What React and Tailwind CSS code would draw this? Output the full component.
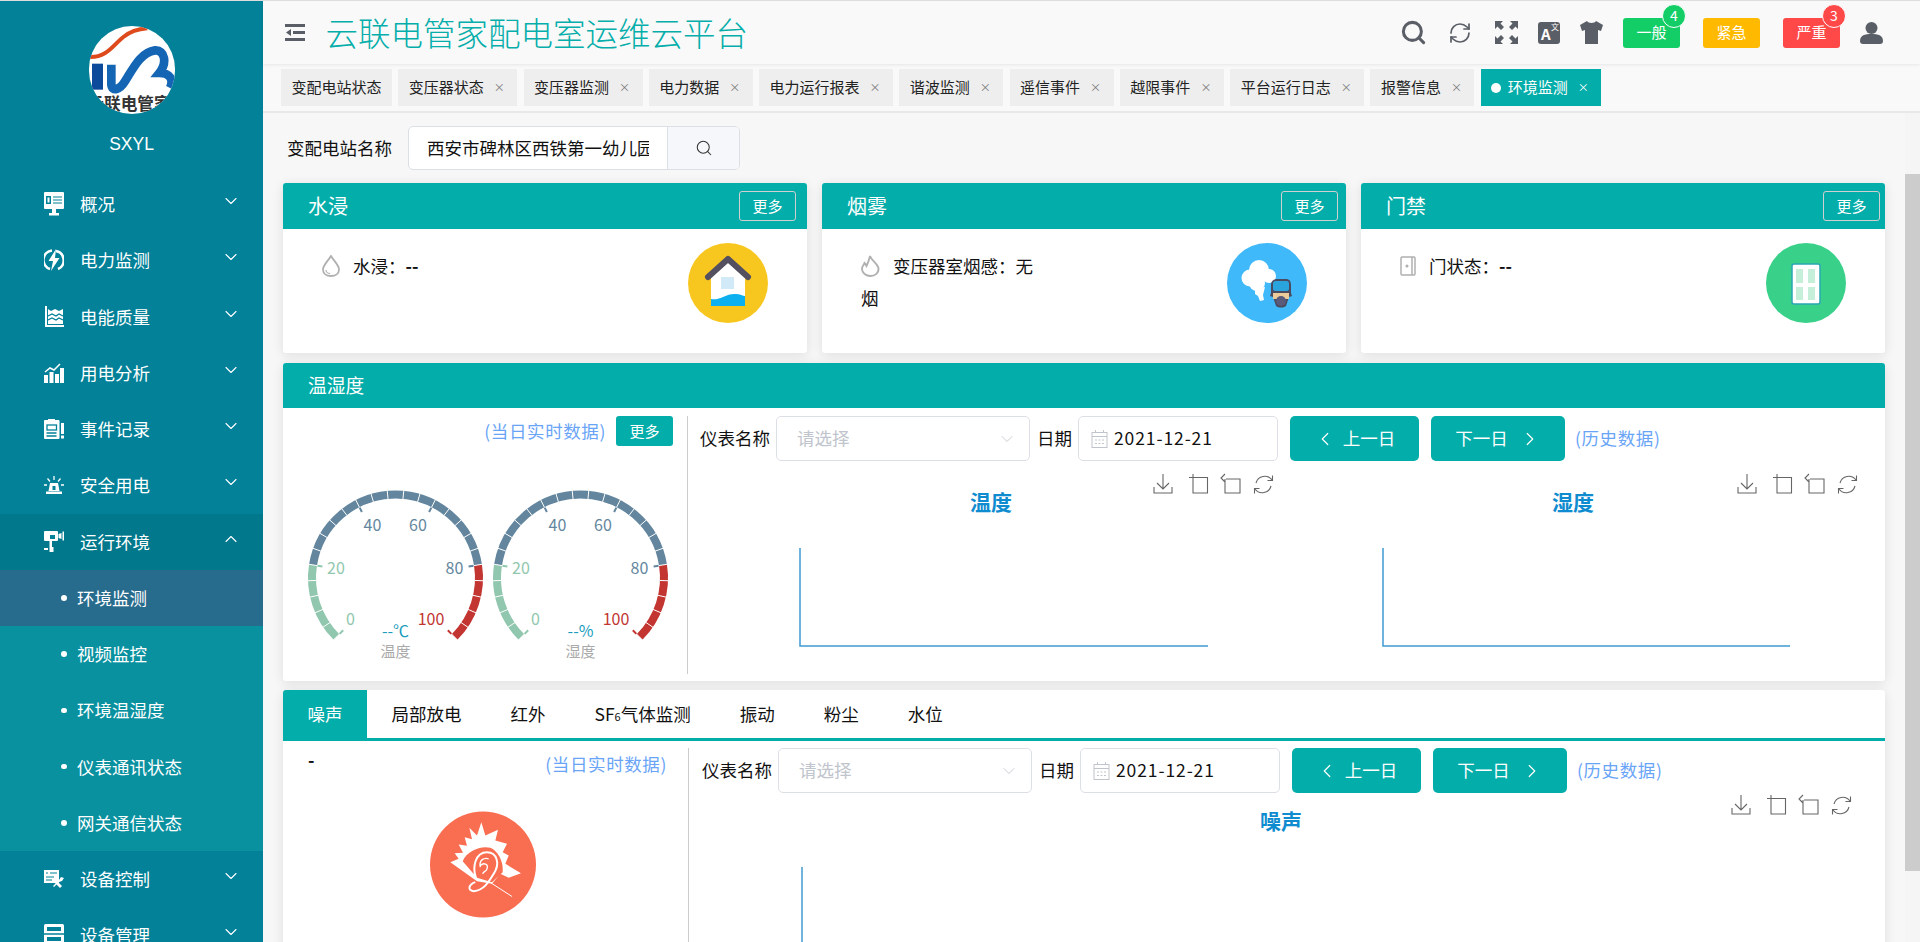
import React from "react";
import { ChevronDown, ChevronUp, ChevronLeft, ChevronRight, Search, RefreshCw } from "lucide-react";

const W = "#ffffff";

function IconMonitor() {
  return (
    <svg width="20" height="24" viewBox="0 0 20 24">
      <rect x="0" y="0" width="20" height="17" rx="1" fill={W} />
      <rect x="2" y="4" width="5" height="8" fill="#028198" />
      <rect x="3.5" y="5.5" width="2" height="5" fill={W} />
      <path d="M9 5h9M9 8h9M9 11h9" stroke="#028198" strokeWidth="1.2" />
      <rect x="8" y="17" width="4" height="4" fill={W} />
      <rect x="5" y="21" width="10" height="2.5" fill={W} />
    </svg>
  );
}
function IconPower() {
  return (
    <svg width="20" height="24" viewBox="0 0 20 24">
      <path d="M8 2.5A9.5 9.5 0 0 0 6 21M12 3a9.5 9.5 0 0 1 2 18" stroke={W} strokeWidth="2.5" fill="none" />
      <path d="M12 1L4.5 13H9L7 23l8.5-13H11z" fill={W} />
    </svg>
  );
}
function IconQuality() {
  return (
    <svg width="20" height="22" viewBox="0 0 20 22">
      <path d="M1 0v21h19v-2H3V0z" fill={W} />
      <path d="M4 3l3 2 4-2 4 2 4-2v15H4z" fill={W} />
      <path d="M4 10l4-2 4 2 3-2 4 2M4 14l4-2 4 2 3-2 4 2" stroke="#028198" strokeWidth="1.3" fill="none" />
    </svg>
  );
}
function IconBars() {
  return (
    <svg width="20" height="20" viewBox="0 0 20 20">
      <rect x="0" y="12" width="4" height="8" fill={W} />
      <rect x="5.5" y="9" width="4" height="11" fill={W} />
      <rect x="11" y="11" width="4" height="9" fill={W} />
      <rect x="16" y="5" width="4" height="15" fill={W} />
      <path d="M1 9l5-4 4 2 6-6" stroke={W} strokeWidth="1.5" fill="none" />
    </svg>
  );
}
function IconEvent() {
  return (
    <svg width="20" height="20" viewBox="0 0 20 20">
      <rect x="0" y="1" width="15.5" height="19" rx="1" fill={W} />
      <rect x="17" y="4" width="3" height="11" fill={W} />
      <rect x="17" y="16.5" width="3" height="3" fill={W} />
      <rect x="4" y="0" width="7" height="4" fill={W} />
      <rect x="3" y="6" width="9.5" height="5" fill="none" stroke="#028198" strokeWidth="1.3" />
      <path d="M2.5 14h10M2.5 17h10" stroke="#028198" strokeWidth="1.3" />
    </svg>
  );
}
function IconSiren() {
  return (
    <svg width="20" height="18" viewBox="0 0 20 18">
      <path d="M6 7h8l1.5 8h-11z" fill={W} />
      <rect x="8.5" y="10" width="3" height="4" fill="#028198" />
      <rect x="2" y="15.5" width="16" height="2.5" fill={W} />
      <path d="M10 0v4M3.5 2.5l2.5 3M16.5 2.5l-2.5 3M0 9h3M17 9h3" stroke={W} strokeWidth="1.3" />
    </svg>
  );
}
function IconCamera() {
  return (
    <svg width="20" height="22" viewBox="0 0 20 22">
      <rect x="0" y="0" width="14" height="10" rx="1" fill={W} />
      <rect x="6" y="4" width="5" height="4" fill="#028198" />
      <path d="M14.5 3l3-1v6l-3-1zM18.500 0.500h1.500v9h-1.500z" fill={W} />
      <rect x="5.5" y="10" width="2.5" height="6" fill={W} />
      <rect x="0" y="17" width="4" height="2" fill={W} />
      <rect x="5.5" y="16" width="4" height="5" fill={W} />
    </svg>
  );
}
function IconControl() {
  return (
    <svg width="20" height="18" viewBox="0 0 20 18">
      <rect x="0" y="0" width="15" height="13" fill={W} />
      <path d="M2 3h2M6 3h7M2 7h8M2 10h6" stroke="#028198" strokeWidth="1.2" />
      <path d="M9 16l6-6 2-3 3 1-2 3-3 1-5 5z" fill={W} />
      <path d="M12 10l6 6-2 2-6-6z" fill={W} />
    </svg>
  );
}
function IconDevice() {
  return (
    <svg width="20" height="22" viewBox="0 0 20 22">
      <rect x="0" y="0" width="20" height="22" rx="1.5" fill={W} />
      <rect x="3" y="3" width="14" height="4" fill="#028198" />
      <path d="M0 10h20" stroke="#028198" strokeWidth="1.5" />
      <rect x="3" y="13" width="14" height="4" fill="#028198" />
    </svg>
  );
}

function Logo() {
  return (
    <svg viewBox="57 50 258 262" className="w-[86px] h-[88px] rounded-full bg-white">
      <path d="M57 142C110 145 130 105 160 82C180 66 205 58 232 56" stroke="#df4a1c" strokeWidth="12" fill="none" />
      <rect x="66" y="162" width="33" height="78" fill="#0d4a9c" />
      <path d="M124 165V225C126 248 150 240 165 215C190 175 212 128 255 122C285 120 292 160 268 190C300 190 312 210 300 235" stroke="#1565b5" strokeWidth="26" fill="none" />
      <text x="52" y="300" fontSize="50" fontWeight="700" fill="#333333">云联电管家</text>
    </svg>
  );
}

function House() {
  return (
    <svg width="80" height="80" viewBox="0 0 80 80">
      <circle cx="40" cy="40" r="40" fill="#f8c71f" />
      <path d="M23 32L40 17 57 32V62H23z" fill="#ffffff" />
      <path d="M20 34L40 16 60 34" stroke="#54505f" strokeWidth="6" strokeLinecap="round" strokeLinejoin="round" fill="none" />
      <rect x="33" y="34" width="13" height="12" fill="#d2eaf8" />
      <path d="M23 56C32 58 38 50 48 51C52 51 55 53 57 53V63H23z" fill="#0cb0ef" />
    </svg>
  );
}
function Smoke() {
  return (
    <svg width="80" height="80" viewBox="0 0 80 80">
      <circle cx="40" cy="40" r="40" fill="#40b9fb" />
      <circle cx="23" cy="35" r="8.5" fill="#fff" />
      <circle cx="32" cy="27" r="10" fill="#fff" />
      <circle cx="42" cy="33" r="7" fill="#fff" />
      <circle cx="30" cy="40" r="8" fill="#fff" />
      <path d="M28 46l10-2-2 8 1 5-4 1-2-5-3-2z" fill="#fff" />
      <path d="M44 50V42c0-4 3-6 6-6h9c3 0 5 2 5 6v8l1 3-3 1-3 9c-3 2-7 2-10 0l-3-9-3-1z" fill="#4a4a60" />
      <rect x="46" y="38" width="16" height="10" rx="2.500" fill="#2aa4dc" />
      <rect x="46" y="50" width="16" height="6" fill="#eccb9a" />
      <ellipse cx="54" cy="58" rx="5" ry="5" fill="#5a5a7a" />
    </svg>
  );
}
function Door() {
  return (
    <svg width="80" height="80" viewBox="0 0 80 80">
      <circle cx="40" cy="40" r="40" fill="#39d08a" />
      <rect x="26" y="21" width="28" height="40" rx="2" fill="#fff" stroke="#2aa6b4" strokeWidth="1.5" />
      <rect x="30" y="26" width="7" height="14" fill="#c5efd9" />
      <rect x="42" y="26" width="7" height="14" fill="#c5efd9" />
      <rect x="30" y="44" width="7" height="13" fill="#c5efd9" />
      <rect x="42" y="44" width="7" height="13" fill="#c5efd9" />
    </svg>
  );
}
function Noise() {
  return (
    <svg width="106" height="107" viewBox="14 12 318 320">
      <circle cx="173" cy="172" r="159" fill="#f96d51" />
      <path d="M75 165L100 155 88 138 113 137 100 112 125 116 118 90 140 96 132 62 155 85 168 45 180 85 218 68 210 100 245 110 232 135 250 145 240 170 287 198 250 212 225 200 200 230 155 222z" fill="#ffffff" />
      <path d="M112 162C125 132 165 115 195 122C215 130 235 160 232 195L200 225 155 212z" fill="#f96d51" />
      <path d="M152 213C140 180 150 135 185 135C215 135 225 170 205 200C190 225 175 250 145 252C125 250 130 232 150 225" stroke="#ffffff" strokeWidth="6" fill="none" />
      <path d="M165 180C160 160 175 150 190 155M165 175C175 165 190 170 185 185C182 195 175 190 172 200" stroke="#ffffff" strokeWidth="4" fill="none" />
      <path d="M195 226L260 268" stroke="#ffffff" strokeWidth="3" />
    </svg>
  );
}

function Gauge({ value, label }) {
  const cx = 92.5;
  const cy = 95;
  const pt = (v, r) => {
    const a = ((225 - 2.7 * v) * Math.PI) / 180;
    return [cx + r * Math.cos(a), cy - r * Math.sin(a)];
  };
  const arc = (from, to, r) => {
    const [x1, y1] = pt(from, r);
    const [x2, y2] = pt(to, r);
    const large = (to - from) * 2.7 > 180 ? 1 : 0;
    return `M${x1} ${y1}A${r} ${r} 0 ${large} 1 ${x2} ${y2}`;
  };
  const colorOf = (v) => (v <= 20 ? "#91c7ae" : v <= 80 ? "#63869e" : "#c23531");
  const ticks = [];
  for (let v = 0; v <= 100; v += 4) {
    const [x1, y1] = pt(v, 79);
    const [x2, y2] = pt(v, 88);
    ticks.push(<line key={v} x1={x1} y1={y1} x2={x2} y2={y2} stroke="#ffffff" strokeWidth="1" />);
  }
  const splits = [0, 20, 40, 60, 80, 100].map((v) => {
    const [x1, y1] = pt(v, 74);
    const [x2, y2] = pt(v, 79);
    return <line key={v} x1={x1} y1={y1} x2={x2} y2={y2} stroke={colorOf(v)} strokeWidth="2" />;
  });
  return (
    <svg width="185" height="190" viewBox="0 0 185 190">
      <path d={arc(0, 20, 83.5)} stroke="#91c7ae" strokeWidth="8" fill="none" />
      <path d={arc(20, 80, 83.5)} stroke="#63869e" strokeWidth="8" fill="none" />
      <path d={arc(80, 100, 83.5)} stroke="#c23531" strokeWidth="8" fill="none" />
      {ticks}
      {splits}
      <g fontSize="16" textAnchor="middle" dominantBaseline="central">
        <text x="47.5" y="135" fill="#91c7ae">0</text>
        <text x="33" y="84" fill="#91c7ae">20</text>
        <text x="69.5" y="41" fill="#63869e">40</text>
        <text x="115" y="41" fill="#63869e">60</text>
        <text x="151.5" y="84" fill="#63869e">80</text>
        <text x="128" y="135" fill="#c23531">100</text>
        <text x="92.5" y="146.5" fill="#1a9dbd">{value}</text>
        <text x="92.5" y="167" fontSize="15" fill="#aaaaaa">{label}</text>
      </g>
    </svg>
  );
}

function Toolbox({ x, y }) {
  return (
    <g stroke="#666666" strokeWidth="1.1" fill="none" transform={`translate(${x} ${y})`}>
      <path d="M10 0v15M4 9l6 6 6-6M1 13v6h18v-6" />
      <path d="M36 3.500H54.500V19H40V0" />
      <path d="M73 5H87V19H72V5M72 0l-4 4 4 4" />
      <path d="M103 9a9 9 0 0 1 16-3M119.500 1.500v5h-5M118 12a9 9 0 0 1-16 3M101.500 19.500v-5h5" />
    </g>
  );
}

function Chart({ title, h, titleX, titleY, iconX, iconY, axisTop, axisBottom, axisRight, width }) {
  return (
    <svg width={width} height={h} viewBox={`0 0 ${width} ${h}`} className="block">
      <text x={titleX} y={titleY} fontSize="21" fontWeight="700" fill="#0f8ccf" textAnchor="middle" dominantBaseline="central">{title}</text>
      <Toolbox x={iconX} y={iconY} />
      <path d={`M100 ${axisTop}V${axisBottom}${axisRight ? `H${axisRight}` : ""}`} stroke="#3f9bd2" strokeWidth="1.5" fill="none" />
    </svg>
  );
}

function Filters() {
  return (
    <div className="flex items-center text-[17.5px] text-[#111]">
      <span className="w-[70px] whitespace-nowrap">仪表名称</span>
      <div className="ml-[6px] w-[254px] h-[45px] border border-[#dcdfe6] rounded-[5px] flex items-center justify-between pl-[20px] pr-[12px] text-[#c0c4cc]">
        <span>请选择</span>
        <ChevronDown size={20} strokeWidth={1} />
      </div>
      <span className="ml-[7px] w-[35px] whitespace-nowrap">日期</span>
      <div className="ml-[6px] w-[200px] h-[45px] border border-[#dcdfe6] rounded-[5px] flex items-center pl-[12px]">
        <svg width="17" height="18" viewBox="0 0 17 18" fill="none" stroke="#c0c4cc">
          <rect x="1" y="2.500" width="15" height="15" />
          <path d="M1 6.500h15M4.500 0v3M12.500 0v3" />
          <path d="M4 10h9M4 13.500h9" strokeDasharray="2 1.500" />
        </svg>
        <span className="ml-[6px] tracking-[0.9px]">2021-12-21</span>
      </div>
      <button className="ml-[12px] w-[129px] h-[45px] rounded-[5px] bg-[#03ada9] text-white flex items-center justify-center gap-[7px]">
        <ChevronLeft size={22} strokeWidth={1.3} />
        <span>上一日</span>
      </button>
      <button className="ml-[12px] w-[134px] h-[45px] rounded-[5px] bg-[#03ada9] text-white flex items-center justify-center gap-[11px]">
        <span>下一日</span>
        <ChevronRight size={22} strokeWidth={1.3} />
      </button>
      <span className="ml-[10px] tracking-[0.6px] text-[#69a4f7]">(历史数据)</span>
    </div>
  );
}

const menu = [
  { name: "概况", icon: IconMonitor },
  { name: "电力监测", icon: IconPower },
  { name: "电能质量", icon: IconQuality },
  { name: "用电分析", icon: IconBars },
  { name: "事件记录", icon: IconEvent },
  { name: "安全用电", icon: IconSiren },
  { name: "运行环境", icon: IconCamera, open: true },
];
const subMenu = ["环境监测", "视频监控", "环境温湿度", "仪表通讯状态", "网关通信状态"];
const menu2 = [
  { name: "设备控制", icon: IconControl },
  { name: "设备管理", icon: IconDevice },
];

function MenuRow({ item }) {
  const Icon = item.icon;
  return (
    <div className={`h-[56.25px] flex items-center text-[17.5px] text-white ${item.open ? "bg-[#01788c]" : ""}`}>
      <div className="w-[20px] ml-[44px] flex justify-center">
        <Icon />
      </div>
      <span className="ml-[16px]">{item.name}</span>
      <span className="ml-auto mr-[22px] -mt-[6px]">
        {item.open ? <ChevronUp size={20} strokeWidth={1.3} /> : <ChevronDown size={20} strokeWidth={1.3} />}
      </span>
    </div>
  );
}

const tabs = ["变压器状态", "变压器监测", "电力数据", "电力运行报表", "谐波监测", "遥信事件", "越限事件", "平台运行日志", "报警信息"];

function Card({ title, moreClass, children, art }) {
  return (
    <div className="bg-white h-[170px] rounded-[3px] shadow-[0_2px_12px_0_rgba(0,0,0,0.1)] overflow-hidden">
      <div className="h-[46px] bg-[#03ada9] flex items-center justify-between pl-[25px] text-white">
        <span className="text-[20px]">{title}</span>
        <button className={`${moreClass} w-[57px] h-[30px] border border-[#d0d0d0] rounded-[3px] text-[15px]`}>更多</button>
      </div>
      <div className="flex justify-between pl-[39px] pr-[39px]">
        <div className="w-[180px] pt-[21px] text-[17.5px] leading-[32px] text-[#111]">{children}</div>
        <div className="pt-[14px]">{art}</div>
      </div>
    </div>
  );
}

export default function App() {
  return (
    <div className="flex h-screen w-full overflow-hidden border-t border-[#dddddd] bg-[#f7f7f7] font-['Noto_Sans_CJK_SC',sans-serif]">
      <aside className="w-[263px] shrink-0 bg-[#028198] overflow-hidden">
        <div className="h-[175px] flex flex-col items-center pt-[25px]">
          <Logo />
          <div className="mt-[17px] text-[17.5px] text-white font-['Liberation_Sans',sans-serif]">SXYL</div>
        </div>
        {menu.map((m) => (
          <MenuRow key={m.name} item={m} />
        ))}
        <div className="bg-[#0a91a0]">
          {subMenu.map((s, i) => (
            <div key={s} className={`h-[56.25px] flex items-center text-[17.5px] text-white pl-[61px] ${i === 0 ? "bg-[#286c8d]" : ""}`}>
              <span className="w-[5.500px] h-[5.500px] rounded-full bg-white" />
              <span className="ml-[10.500px]">{s}</span>
            </div>
          ))}
        </div>
        {menu2.map((m) => (
          <MenuRow key={m.name} item={m} />
        ))}
      </aside>

      <div className="flex-1 min-w-0 flex flex-col">
        <header className="h-[63px] shrink-0 bg-[#f9f9f9] shadow-[0_1px_3px_rgba(0,0,0,0.08)] flex items-center pl-[21.500px] relative z-10">
          <svg width="20" height="17" viewBox="0 0 20 17">
            <rect x="0" y="0" width="20" height="3" fill="#5a5e66" />
            <rect x="8" y="7" width="12" height="3" fill="#5a5e66" />
            <rect x="0" y="14" width="20" height="3" fill="#5a5e66" />
            <path d="M6 5L1 8.500 6 12z" fill="#5a5e66" />
          </svg>
          <h1 className="ml-[21px] text-[32.500px] leading-none font-light text-[#05aeaa] whitespace-nowrap">云联电管家配电室运维云平台</h1>
          <Search className="ml-auto" size={27} strokeWidth={2.7} color="#5a5e66" />
          <RefreshCw className="ml-[21px]" size={24} strokeWidth={1.7} color="#5a5e66" />
          <svg className="ml-[23px]" width="23" height="23" viewBox="0 0 23 23" fill="#5a5e66">
            <path d="M0 0h8L5.500 2.500 9 6 6 9 2.500 5.500 0 8zM23 0v8L20.500 5.500 17 9 14 6 17.500 2.500 15 0zM0 23v-8L2.500 17.500 6 14 9 17 5.500 20.500 8 23zM23 23h-8L17.500 20.500 14 17 17 14 20.500 17.500 23 15z" />
          </svg>
          <div className="ml-[20px] w-[22px] h-[22px] rounded-[3px] bg-[#5a5e66] text-white relative">
            <span className="absolute left-[3px] top-[4px] text-[15px] leading-none font-bold">A</span>
            <span className="absolute right-[1px] top-[1px] text-[8px] leading-none">文</span>
          </div>
          <svg className="ml-[20px]" width="23" height="23" viewBox="0 0 23 23" fill="#5a5e66">
            <path d="M7 0C8 2.500 15 2.500 16 0L23 4 21 10 18 9V23H5V9L2 10 0 4z" />
          </svg>
          <div className="ml-[20px] w-[57px] h-[30px] rounded-[3px] bg-[#13ce66] text-white text-[15px] flex items-center justify-center relative">
            一般
            <span className="absolute left-[39px] -top-[14px] w-[24px] h-[24px] rounded-full bg-[#13ce66] border border-white flex items-center justify-center text-[14px]">4</span>
          </div>
          <div className="ml-[23px] w-[57px] h-[30px] rounded-[3px] bg-[#ffba00] text-white text-[15px] flex items-center justify-center">紧急</div>
          <div className="ml-[23px] w-[57px] h-[30px] rounded-[3px] bg-[#ff4949] text-white text-[15px] flex items-center justify-center relative">
            严重
            <span className="absolute left-[39px] -top-[14px] w-[24px] h-[24px] rounded-full bg-[#ff4949] border border-white flex items-center justify-center text-[14px]">3</span>
          </div>
          <svg className="ml-[20px] mr-[37px]" width="23" height="22" viewBox="0 0 23 22" fill="#5a5e66">
            <circle cx="11.500" cy="6" r="6" />
            <path d="M0 19c0-6 5-7 11.500-7S23 13 23 19c0 2-1 3-3 3H3c-2 0-3-1-3-3z" />
          </svg>
        </header>

        <nav className="h-[49px] shrink-0 bg-[#f9f9f9] border-b-2 border-[#e8e8e8] pt-[5px] pl-[18px] flex items-start gap-[6.250px] text-[15px] text-[#222] whitespace-nowrap">
          <div className="h-[37px] px-[10.500px] bg-[#eeeeee] flex items-center">变配电站状态</div>
          {tabs.map((t) => (
            <div key={t} className="h-[37px] px-[10.500px] bg-[#eeeeee] flex items-center">
              {t}
              <span className="ml-[8px] w-[15px] text-center text-[11px] text-[#777] leading-none">×</span>
            </div>
          ))}
          <div className="h-[37px] px-[10.500px] bg-[#03ada9] text-white flex items-center">
            <span className="w-[10px] h-[10px] rounded-full bg-white mr-[6.500px]" />
            环境监测
            <span className="ml-[8px] w-[15px] text-center text-[11px] leading-none">×</span>
          </div>
        </nav>

        <div className="flex-1 min-h-0 flex">
          <main className="flex-1 min-w-0 px-[20px] pt-[13px] overflow-hidden">
            <div className="flex items-center h-[44px] pl-[4px] text-[17.5px] text-[#111]">
              <span className="whitespace-nowrap">变配电站名称</span>
              <div className="ml-[16px] h-[44px] w-[332px] flex border border-[#dcdfe6] rounded-[5px] overflow-hidden bg-white">
                <div className="w-[258px] pl-[18px]">
                  <div className="w-[222px] overflow-hidden whitespace-nowrap leading-[42px]">西安市碑林区西铁第一幼儿园</div>
                </div>
                <div className="flex-1 bg-[#f5f7fa] border-l border-[#dcdfe6] flex items-center justify-center">
                  <Search size={18} strokeWidth={1.4} color="#333333" />
                </div>
              </div>
            </div>

            <div className="mt-[13px] grid grid-cols-3 gap-[15px]">
              <Card title="水浸" moreClass="mr-[11px]" art={<House />}>
                <div className="flex items-center gap-[13px]">
                  <svg width="18" height="22" viewBox="0 0 18 22" fill="none" stroke="#b0b0b0" strokeWidth="1.800">
                    <path d="M9 1C6 6 1 10 1 14.500 1 18.500 4.500 21 9 21s8-2.500 8-6.500C17 10 12 6 9 1z" />
                    <path d="M4 15c0 2 2 3.500 4 3.500" strokeWidth="1.200" />
                  </svg>
                  <span>水浸：<b className="font-bold">--</b></span>
                </div>
              </Card>
              <Card title="烟雾" moreClass="mr-[8px]" art={<Smoke />}>
                <svg className="inline-block align-[-4px] mr-[13px]" width="19" height="22" viewBox="0 0 19 22" fill="none" stroke="#b0b0b0" strokeWidth="1.800">
                  <path d="M9 1c1 4 7 7 8.500 12C18 18 14 21 9.500 21S1 18 1 14c0-3 2-4 2.500-6 1 1 1.500 2 2 3C7 8 8 5 9 1z" />
                </svg>
                变压器室烟感：无烟
              </Card>
              <Card title="门禁" moreClass="mr-[5px]" art={<Door />}>
                <div className="flex items-center gap-[13px]">
                  <svg width="16" height="20" viewBox="0 0 16 20" fill="none" stroke="#b0b0b0" strokeWidth="1.500">
                    <rect x="1" y="1" width="14" height="18" rx="1" />
                    <path d="M12 1v18" />
                    <circle cx="7" cy="10" r="0.800" />
                  </svg>
                  <span>门状态：<b className="font-bold">--</b></span>
                </div>
              </Card>
            </div>

            <section className="mt-[10px] h-[318px] bg-white rounded-[3px] shadow-[0_2px_12px_0_rgba(0,0,0,0.1)] overflow-hidden">
              <div className="h-[45px] bg-[#03ada9] pl-[25px] flex items-center text-white text-[18.750px]">温湿度</div>
              <div className="flex pt-[8px]">
                <div className="w-[404px] shrink-0">
                  <div className="flex items-center justify-end pr-[14px] h-[30px]">
                    <span className="text-[17.5px] tracking-[0.6px] text-[#69a4f7]">(当日实时数据)</span>
                    <button className="ml-[10px] w-[57px] h-[30px] bg-[#03ada9] text-white rounded-[3px] text-[15px]">更多</button>
                  </div>
                  <div className="flex mt-[37px] pl-[20px]">
                    <Gauge value="--℃" label="温度" />
                    <Gauge value="--%" label="湿度" />
                  </div>
                </div>
                <div className="flex-1 min-w-0 border-l border-[#cccccc] h-[258px] pl-[12px]">
                  <Filters />
                  <div className="flex">
                    <Chart title="温度" width={583} h={200} titleX={291} titleY={40} iconX={453} iconY={13} axisTop={87} axisBottom={185} axisRight={508} />
                    <Chart title="湿度" width={583} h={200} titleX={290} titleY={40} iconX={454} iconY={13} axisTop={87} axisBottom={185} axisRight={507} />
                  </div>
                </div>
              </div>
            </section>

            <section className="mt-[9px] h-[400px] bg-white rounded-[3px] shadow-[0_2px_12px_0_rgba(0,0,0,0.1)] overflow-hidden">
              <div className="flex h-[51px] border-b-[3px] border-[#03ada9] text-[17.5px] text-[#111] whitespace-nowrap">
                <div className="px-[24.500px] h-full bg-[#03ada9] text-white flex items-center">噪声</div>
                <div className="px-[24.500px] flex items-center">局部放电</div>
                <div className="px-[24.500px] flex items-center">红外</div>
                <div className="px-[24.500px] flex items-center">SF<span className="text-[11px] mt-[5px]">6</span>气体监测</div>
                <div className="px-[24.500px] flex items-center">振动</div>
                <div className="px-[24.500px] flex items-center">粉尘</div>
                <div className="px-[24.500px] flex items-center">水位</div>
              </div>
              <div className="flex pt-[7px]">
                <div className="w-[405px] shrink-0 pl-[25px] pr-[21px]">
                  <div className="flex justify-between items-center h-[32px] text-[17.5px]">
                    <span className="font-bold text-[#111] -mt-[8px]">-</span>
                    <span className="tracking-[0.6px] text-[#69a4f7]">(当日实时数据)</span>
                  </div>
                  <div className="mt-[31px] flex justify-center pr-[9px]">
                    <Noise />
                  </div>
                </div>
                <div className="flex-1 min-w-0 border-l border-[#cccccc] h-[300px] pl-[13px]">
                  <Filters />
                  <Chart title="噪声" width={1180} h={150} titleX={579} titleY={27} iconX={1029} iconY={2} axisTop={74} axisBottom={150} />
                </div>
              </div>
            </section>
          </main>
          <div className="w-[15px] shrink-0 bg-[#f5f5f5] pt-[61px]">
            <div className="h-[697px] bg-[#cccccc]" />
          </div>
        </div>
      </div>
    </div>
  );
}
